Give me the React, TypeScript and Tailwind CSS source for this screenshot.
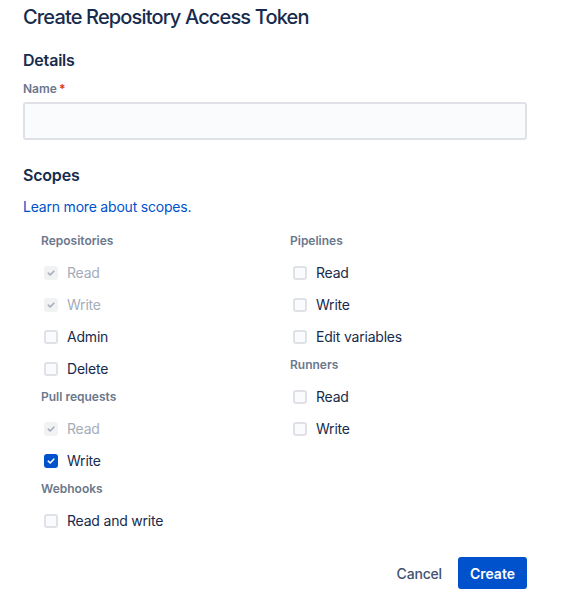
import React from "react";

type Scope = {
  label: string;
  state: "empty" | "checked" | "locked";
};

type Group = {
  title: string;
  items: Scope[];
};

const leftGroups: Group[] = [
  {
    title: "Repositories",
    items: [
      { label: "Read", state: "locked" },
      { label: "Write", state: "locked" },
      { label: "Admin", state: "empty" },
      { label: "Delete", state: "empty" },
    ],
  },
  {
    title: "Pull requests",
    items: [
      { label: "Read", state: "locked" },
      { label: "Write", state: "checked" },
    ],
  },
  {
    title: "Webhooks",
    items: [{ label: "Read and write", state: "empty" }],
  },
];

const rightGroups: Group[] = [
  {
    title: "Pipelines",
    items: [
      { label: "Read", state: "empty" },
      { label: "Write", state: "empty" },
      { label: "Edit variables", state: "empty" },
    ],
  },
  {
    title: "Runners",
    items: [
      { label: "Read", state: "empty" },
      { label: "Write", state: "empty" },
    ],
  },
];

const Check = ({ color }: { color: string }) => (
  <svg width="10" height="10" viewBox="0 0 10 10" fill="none">
    <path
      d="M2.3 5.2 L4.2 7 L7.8 3.2"
      stroke={color}
      strokeWidth="1.6"
      strokeLinecap="round"
      strokeLinejoin="round"
    />
  </svg>
);

const Checkbox = ({ state }: { state: Scope["state"] }) => {
  if (state === "checked") {
    return (
      <span className="w-[14px] h-[14px] rounded-[3px] bg-[#0052cc] flex items-center justify-center">
        <Check color="#ffffff" />
      </span>
    );
  }
  if (state === "locked") {
    return (
      <span className="w-[14px] h-[14px] rounded-[3px] bg-[#f1f2f4] flex items-center justify-center">
        <Check color="#a5adba" />
      </span>
    );
  }
  return (
    <span className="w-[14px] h-[14px] rounded-[3px] bg-[#fafbfc] border-2 border-[#dfe1e6]" />
  );
};

const ScopeGroup = ({ group, first }: { group: Group; first: boolean }) => (
  <div className={first ? "" : "mt-1"}>
    <p className="text-[12px] leading-4 font-semibold text-[#6b778c]">{group.title}</p>
    <div className="mt-2 flex flex-col">
      {group.items.map((item, index) => (
        <div key={index} className="h-8 flex items-center pl-[3px] gap-[9px]">
          <Checkbox state={item.state} />
          <span
            className={
              "text-[14px] leading-5 tracking-[-0.2px] " +
              (item.state === "locked" ? "text-[#a5adba]" : "text-[#172b4d]")
            }
          >
            {item.label}
          </span>
        </div>
      ))}
    </div>
  </div>
);

const App = () => {
  return (
    <div
      className="w-[565px] h-[602px] bg-white pl-[23px] pt-[5px]"
      style={{ fontFamily: "Inter, 'Noto Sans', sans-serif" }}
    >
      <div className="w-[504px]">
        <h1 className="text-[20px] leading-6 font-medium tracking-[-0.85px] text-[#172b4d]">
          Create Repository Access Token
        </h1>

        <h2 className="mt-[21px] text-[16px] leading-5 font-semibold tracking-[-0.2px] text-[#172b4d]">
          Details
        </h2>
        <label className="mt-[11px] block text-[12px] leading-4 font-semibold text-[#6b778c]">
          Name<span className="text-[#de350b] ml-[2px]">*</span>
        </label>
        <div className="mt-[5px] h-[38px] w-full rounded-[3px] border-2 border-[#dfe1e6] bg-[#fafbfc]" />

        <h2 className="mt-[25px] text-[16px] leading-5 font-semibold tracking-[-0.2px] text-[#172b4d]">
          Scopes
        </h2>
        <p className="mt-[12px] text-[14px] leading-5 tracking-[-0.2px] text-[#0052cc]">
          Learn more about scopes.
        </p>

        <div className="mt-[16px] pl-[18px] flex">
          <div className="w-[249px]">
            {leftGroups.map((g, i) => (
              <ScopeGroup key={g.title} group={g} first={i === 0} />
            ))}
          </div>
          <div>
            {rightGroups.map((g, i) => (
              <ScopeGroup key={g.title} group={g} first={i === 0} />
            ))}
          </div>
        </div>

        <div className="mt-[20px] flex justify-end gap-1">
          <button className="h-8 px-3 rounded-[3px] text-[14px] font-medium tracking-[-0.2px] text-[#42526e]">
            Cancel
          </button>
          <button className="h-8 px-3 rounded-[3px] bg-[#0052cc] text-[14px] font-semibold text-white">
            Create
          </button>
        </div>
      </div>
    </div>
  );
};

export default App;
